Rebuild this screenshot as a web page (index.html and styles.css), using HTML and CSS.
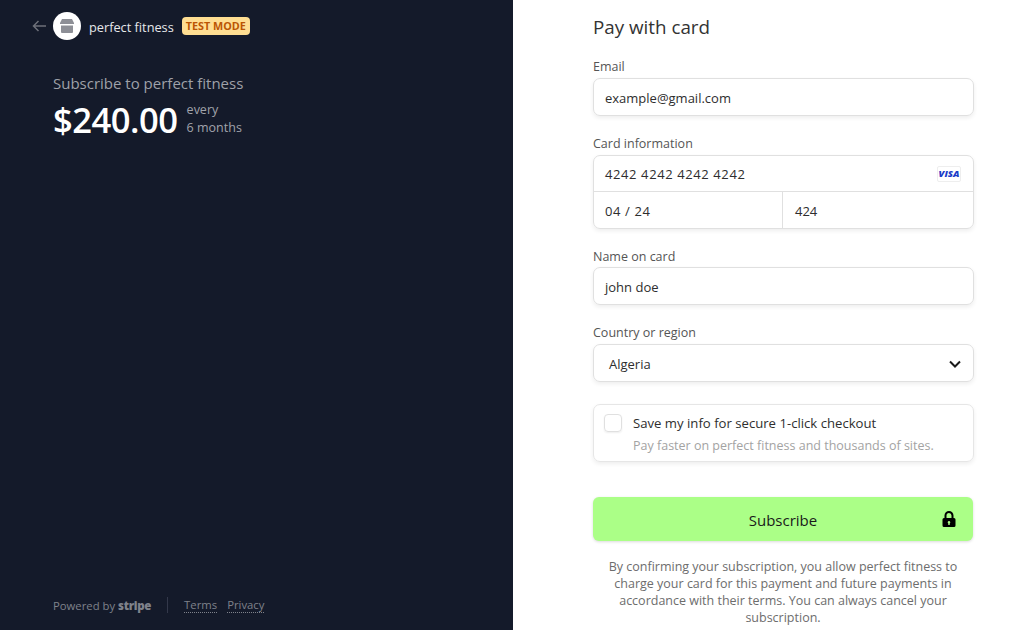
FILE: index.html
```html
<!DOCTYPE html>
<html lang="en">
<head>
    <meta charset="UTF-8">
    <title>Subscribe to perfect fitness</title>
    <link rel="stylesheet" href="styles.css">
</head>
<body>

<div class="summary">
    <div class="merchant">
        <svg class="back" width="14" height="12" viewBox="0 0 14 12"><path d="M6.500 1 1.500 6l5 5M1.500 6H14" fill="none" stroke="#6d7079" stroke-width="1.500"/></svg>
        <span class="logo">
            <svg width="14" height="14" viewBox="0 0 14 14"><path d="M2 0h10l2 4v1H0V4z" fill="#8d8f96"/><path d="M1 6.500h12V13a1 1 0 0 1-1 1H2a1 1 0 0 1-1-1z" fill="#8d8f96"/></svg>
        </span>
        <span class="merchant-name">perfect fitness</span>
        <span class="test-badge">TEST MODE</span>
    </div>
    <div class="product">
        <div class="product-name">Subscribe to perfect fitness</div>
        <div class="price-row">
            <span class="price">$240.00</span>
            <span class="period">every<br>6 months</span>
        </div>
    </div>
    <div class="footer">
        <span class="powered">Powered by <b class="stripe">stripe</b></span>
        <span class="footer-links">
            <a href="#">Terms</a>
            <a href="#">Privacy</a>
        </span>
    </div>
</div>

<div class="checkout">
    <form class="card-form">
        <h1>Pay with card</h1>

        <label class="field-label">Email</label>
        <div class="input-box">example@gmail.com</div>

        <label class="field-label">Card information</label>
        <div class="card-box">
            <div class="card-number">
                <span class="card-digits">4242 4242 4242 4242</span>
                <span class="visa">VISA</span>
            </div>
            <div class="card-extra">
                <span class="card-digits">04 / 24</span>
                <span>424</span>
            </div>
        </div>

        <label class="field-label name-label">Name on card</label>
        <div class="input-box">john doe</div>

        <label class="field-label">Country or region</label>
        <div class="input-box select-box">
            <span>Algeria</span>
            <svg width="12" height="8" viewBox="0 0 12 8"><path d="M1 1.500 6 6.500l5-5" fill="none" stroke="#1a1a1a" stroke-width="2"/></svg>
        </div>

        <div class="save-box">
            <span class="checkbox"></span>
            <div>
                <div class="save-title">Save my info for secure 1-click checkout</div>
                <div class="save-sub">Pay faster on perfect fitness and thousands of sites.</div>
            </div>
        </div>

        <button type="button" class="subscribe">
            Subscribe
            <svg class="lock" width="14" height="17" viewBox="0 0 14 17"><path fill-rule="evenodd" d="M2.500 7V4.500a4.500 4.500 0 0 1 9 0V7h.5a1.500 1.500 0 0 1 1.500 1.500v6A1.500 1.500 0 0 1 12 16H2a1.500 1.500 0 0 1-1.500-1.500v-6A1.500 1.500 0 0 1 2 7zm2 0h5V4.500a2.500 2.500 0 0 0-5 0zM7 10a1.300 1.300 0 0 0-.7 2.400V14h1.400v-1.600A1.300 1.300 0 0 0 7 10z" fill="#000"/></svg>
        </button>

        <p class="terms">By confirming your subscription, you allow perfect fitness to charge your card for this payment and future payments in accordance with their terms. You can always cancel your subscription.</p>
    </form>
</div>

</body>
</html>
```
FILE: styles.css
```css
body {
    font-family: 'Open Sans', 'Noto Sans', Arial, sans-serif;
    margin: 0;
    display: flex;
    height: 630px;
    overflow: hidden;
    background-color: #fff;
}

/* Left panel */
.summary {
    width: 513px;
    flex: none;
    box-sizing: border-box;
    background-color: #141a2a;
    padding: 12px 0 0 53px;
    display: flex;
    flex-direction: column;
}

.merchant {
    display: flex;
    align-items: center;
    height: 28px;
    margin-left: -21px;
}

.back {
    margin-right: 7px;
}

.logo {
    width: 28px;
    height: 28px;
    border-radius: 50%;
    background-color: #fff;
    display: flex;
    align-items: center;
    justify-content: center;
}

.merchant-name {
    margin-left: 8px;
    padding-top: 2px;
    font-size: 12.750px;
    color: #e7e8ea;
}

.test-badge {
    margin-left: 8px;
    padding: 1px 4px;
    border-radius: 4px;
    background-color: #ffde92;
    color: #bb5504;
    font-size: 10.800px;
    font-weight: 700;
    line-height: 16px;
}

.product {
    margin-top: 32px;
}

.product-name {
    font-size: 15px;
    line-height: 22px;
    color: #9fa1a8;
}

.price-row {
    display: flex;
    align-items: center;
    margin-top: 3px;
}

.price {
    padding-top: 2px;
    font-size: 34.600px;
    font-weight: 600;
    line-height: 42px;
    letter-spacing: -0.5px;
    color: #fff;
}

.period {
    margin-left: 9px;
    font-size: 12.500px;
    font-weight: 500;
    line-height: 18px;
    color: #a1a3aa;
}

.footer {
    margin-top: auto;
    margin-bottom: 16px;
    display: flex;
    align-items: center;
    height: 18px;
    font-size: 11.300px;
    color: #7f828b;
}

.stripe {
    font-size: 11.500px;
    font-weight: 800;
    letter-spacing: -0.3px;
}

.footer-links {
    margin-left: 16px;
    padding-left: 16px;
    border-left: 1px solid #33384a;
    display: flex;
    gap: 10px;
}

.footer-links a {
    color: #7f828b;
    text-decoration: none;
    border-bottom: 1px dotted #7f828b;
}

/* Right panel */
.checkout {
    flex: 1;
    padding-left: 80px;
}

.card-form {
    width: 381px;
    display: flex;
    flex-direction: column;
}

h1 {
    margin: 16px 0 1px;
    font-size: 18.800px;
    font-weight: 400;
    line-height: 22px;
    color: #333;
}

.field-label {
    margin-top: 19px;
    margin-bottom: 2px;
    font-size: 12.500px;
    line-height: 18px;
    color: #555;
}

.name-label {
    margin-bottom: 1px;
}

.input-box {
    height: 38px;
    box-sizing: border-box;
    padding: 1px 11px 0;
    display: flex;
    align-items: center;
    border: 1px solid #e0e0e0;
    border-radius: 7px;
    box-shadow: 0 2px 4px rgba(0, 0, 0, 0.07);
    font-size: 13px;
    color: #2e2e2e;
}

.card-box {
    height: 74px;
    box-sizing: border-box;
    border: 1px solid #e0e0e0;
    border-radius: 7px;
    box-shadow: 0 2px 4px rgba(0, 0, 0, 0.07);
    font-size: 13px;
    color: #2e2e2e;
}

.card-number {
    height: 36px;
    box-sizing: border-box;
    padding: 0 12px 0 11px;
    display: flex;
    align-items: center;
    justify-content: space-between;
    border-bottom: 1px solid #e0e0e0;
}

.card-digits {
    letter-spacing: 0.6px;
}

.visa {
    width: 22px;
    height: 14px;
    border: 1px solid #eee;
    border-radius: 2px;
    text-align: center;
    font-size: 9.500px;
    font-style: italic;
    font-weight: 800;
    line-height: 14px;
    color: #1a3cc8;
}

.card-extra {
    display: grid;
    grid-template-columns: 188px 1fr;
    grid-template-rows: 36px;
}

.card-extra span {
    box-sizing: border-box;
    display: flex;
    align-items: center;
    padding: 1px 0 0 11px;
}

.card-extra span + span {
    padding-left: 12px;
    border-left: 1px solid #e0e0e0;
}

.select-box {
    justify-content: space-between;
    padding: 1px 12px 0 15px;
}

.save-box {
    margin-top: 22px;
    height: 58px;
    box-sizing: border-box;
    padding: 9px 10px;
    display: flex;
    gap: 11px;
    border: 1px solid #e6e6e6;
    border-radius: 7px;
    box-shadow: 0 2px 4px rgba(0, 0, 0, 0.07);
}

.checkbox {
    width: 18px;
    height: 18px;
    flex: none;
    box-sizing: border-box;
    border: 1px solid #e0e0e0;
    border-radius: 4px;
    box-shadow: 0 1px 2px rgba(0, 0, 0, 0.07);
}

.save-title {
    font-size: 13.150px;
    line-height: 19px;
    color: #2e2e2e;
}

.save-sub {
    margin-top: 4px;
    font-size: 12.500px;
    line-height: 17px;
    color: #a3a3a3;
}

.subscribe {
    position: relative;
    width: 380px;
    margin-top: 35px;
    height: 44px;
    padding-top: 2px;
    border: 0;
    border-radius: 6px;
    background-color: #abff87;
    box-shadow: 0 1px 3px rgba(0, 0, 0, 0.15);
    font-family: inherit;
    font-size: 15px;
    color: #1a1a1a;
}

.lock {
    position: absolute;
    right: 17px;
    top: 14px;
}

.terms {
    margin: 17px 0 0;
    padding: 0 13px 0 12px;
    text-align: center;
    font-size: 12.500px;
    line-height: 17px;
    color: #6d6d6d;
}
```
